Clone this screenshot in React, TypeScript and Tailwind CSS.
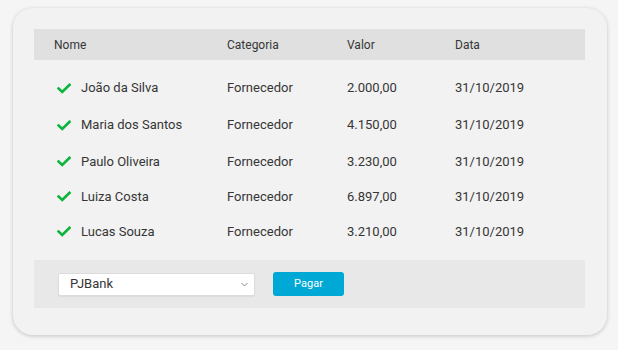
import React from "react";

const rows = [
  { nome: "João da Silva", valor: "2.000,00", h: 36 },
  { nome: "Maria dos Santos", valor: "4.150,00", h: 38 },
  { nome: "Paulo Oliveira", valor: "3.230,00", h: 35 },
  { nome: "Luiza Costa", valor: "6.897,00", h: 35 },
  { nome: "Lucas Souza", valor: "3.210,00", h: 35 },
];

function Check() {
  return (
    <svg width="14" height="11" viewBox="0 0 14 11" className="shrink-0">
      <path d="M1.5 5.5 L5.2 9 L12.5 1.8" fill="none" stroke="#0bb43c" strokeWidth="2.6" strokeLinecap="square" />
    </svg>
  );
}

export default function App() {
  return (
    <div
      className="w-[618px] h-[350px] bg-[#f5f5f5] pt-[8px] pl-[13px]"
      style={{ fontFamily: "Roboto, 'Liberation Sans', sans-serif" }}
    >
      <div className="w-[594px] h-[327px] bg-[#f2f2f2] rounded-[20px] shadow-[0_1px_4px_rgba(0,0,0,0.2)] pt-[21px] pl-[21px] pr-[22px] flex flex-col">
        <div className="h-[31px] bg-[#e0e0e0] flex items-center text-[12px] text-[#363636]">
          <div className="w-[193px] pl-[20px]">Nome</div>
          <div className="w-[120px]">Categoria</div>
          <div className="w-[108px]">Valor</div>
          <div>Data</div>
        </div>
        <div className="flex flex-col pt-[10px] h-[200px] text-[13px] text-[#363636]">
          {rows.map((r) => (
            <div key={r.nome} className="flex items-center" style={{ height: r.h }}>
              <div className="w-[193px] pl-[23px] flex items-center gap-[10px]">
                <Check />
                <span>{r.nome}</span>
              </div>
              <div className="w-[120px]">Fornecedor</div>
              <div className="w-[108px]">{r.valor}</div>
              <div>31/10/2019</div>
            </div>
          ))}
        </div>
        <div className="h-[48px] bg-[#e8e8e8] flex items-center pl-[24px]">
          <div className="w-[197px] h-[23px] bg-white border border-[#dcdcdc] rounded-[2px] shadow-[0_1px_1px_rgba(0,0,0,0.05)] flex items-center justify-between pl-[11px] pr-[6px] text-[13px] text-[#363636]">
            <span>PJBank</span>
            <svg width="7" height="5" viewBox="0 0 7 5">
              <path d="M0.5 1 L3.5 4 L6.5 1" fill="none" stroke="#888" strokeWidth="1" />
            </svg>
          </div>
          <button className="ml-[18px] w-[71px] h-[24px] bg-[#00a8d6] rounded-[3px] text-white text-[11px] flex items-center justify-center">
            Pagar
          </button>
        </div>
      </div>
    </div>
  );
}
